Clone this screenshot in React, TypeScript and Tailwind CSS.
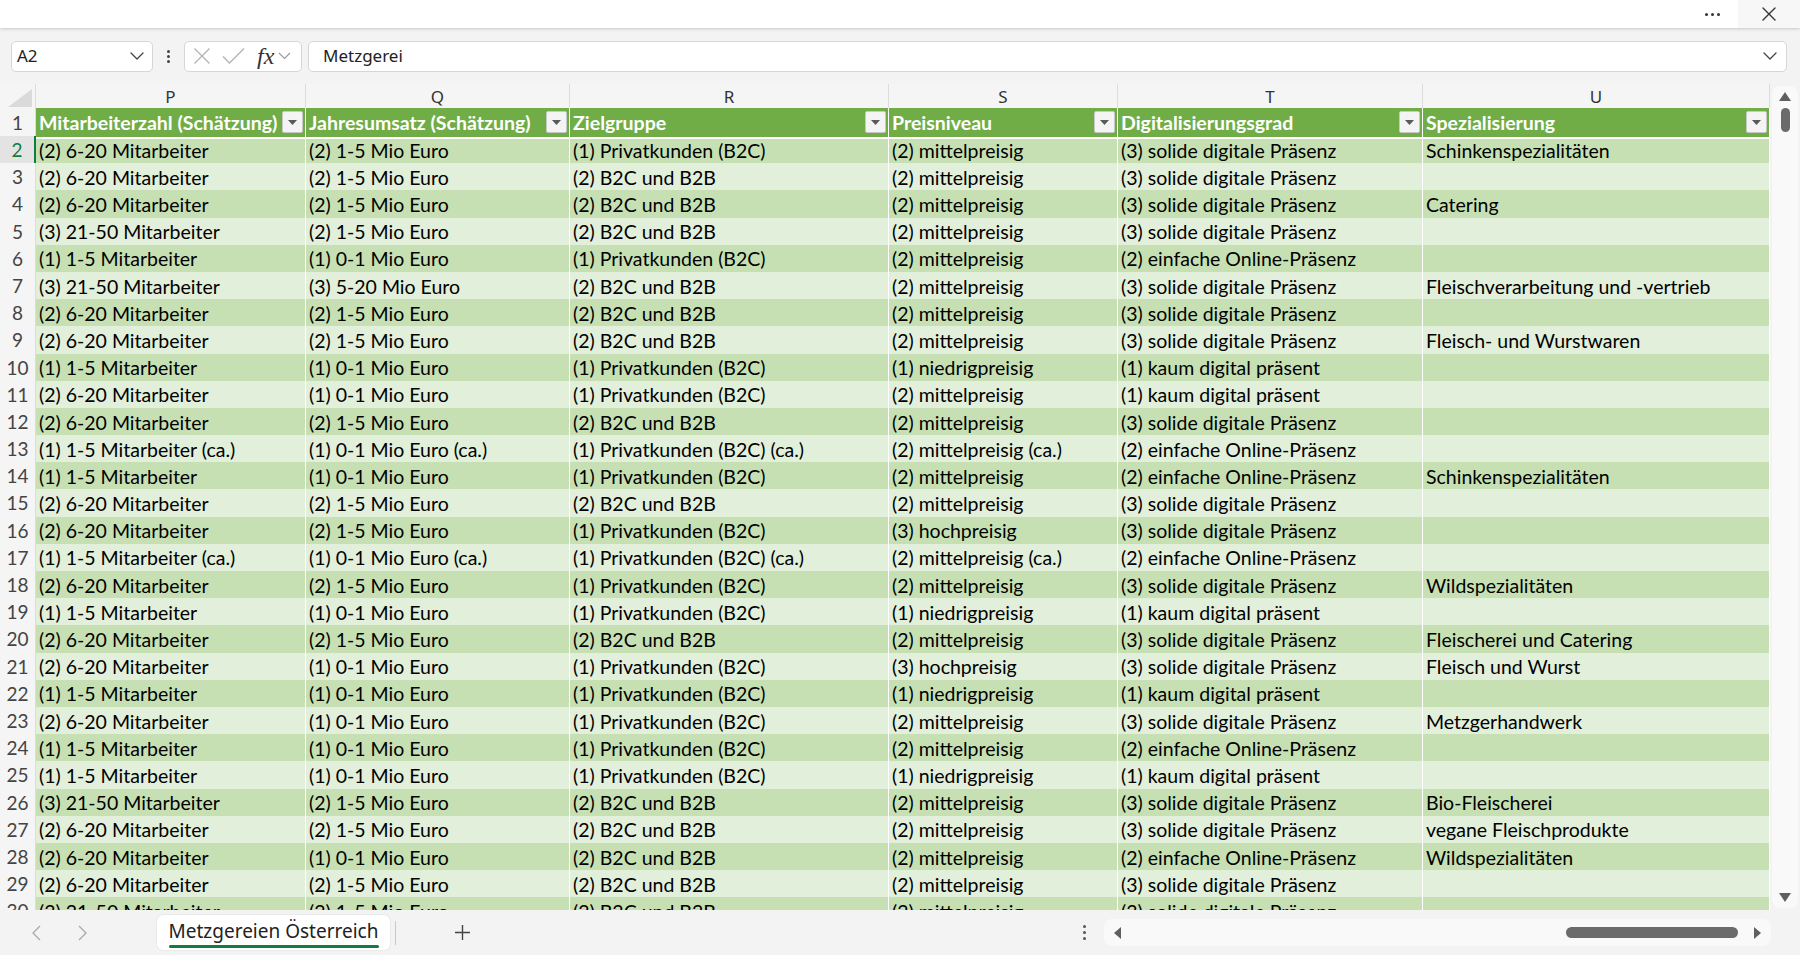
import React from "react";

type Row = [string, string, string, string, string, string];

const M = "(2) 6-20 Mitarbeiter";
const M1 = "(1) 1-5 Mitarbeiter";
const M3 = "(3) 21-50 Mitarbeiter";
const U2 = "(2) 1-5 Mio Euro";
const U1 = "(1) 0-1 Mio Euro";
const PK = "(1) Privatkunden (B2C)";
const BB = "(2) B2C und B2B";
const MP = "(2) mittelpreisig";
const NP = "(1) niedrigpreisig";
const HP = "(3) hochpreisig";
const SD = "(3) solide digitale Präsenz";
const EO = "(2) einfache Online-Präsenz";
const KD = "(1) kaum digital präsent";

const rows: Row[] = [
  [M, U2, PK, MP, SD, "Schinkenspezialitäten"],
  [M, U2, BB, MP, SD, ""],
  [M, U2, BB, MP, SD, "Catering"],
  [M3, U2, BB, MP, SD, ""],
  [M1, U1, PK, MP, EO, ""],
  [M3, "(3) 5-20 Mio Euro", BB, MP, SD, "Fleischverarbeitung und -vertrieb"],
  [M, U2, BB, MP, SD, ""],
  [M, U2, BB, MP, SD, "Fleisch- und Wurstwaren"],
  [M1, U1, PK, NP, KD, ""],
  [M, U1, PK, MP, KD, ""],
  [M, U2, BB, MP, SD, ""],
  ["(1) 1-5 Mitarbeiter (ca.)", "(1) 0-1 Mio Euro (ca.)", "(1) Privatkunden (B2C) (ca.)", "(2) mittelpreisig (ca.)", EO, ""],
  [M1, U1, PK, MP, EO, "Schinkenspezialitäten"],
  [M, U2, BB, MP, SD, ""],
  [M, U2, PK, HP, SD, ""],
  ["(1) 1-5 Mitarbeiter (ca.)", "(1) 0-1 Mio Euro (ca.)", "(1) Privatkunden (B2C) (ca.)", "(2) mittelpreisig (ca.)", EO, ""],
  [M, U2, PK, MP, SD, "Wildspezialitäten"],
  [M1, U1, PK, NP, KD, ""],
  [M, U2, BB, MP, SD, "Fleischerei und Catering"],
  [M, U1, PK, HP, SD, "Fleisch und Wurst"],
  [M1, U1, PK, NP, KD, ""],
  [M, U1, PK, MP, SD, "Metzgerhandwerk"],
  [M1, U1, PK, MP, EO, ""],
  [M1, U1, PK, NP, KD, ""],
  [M3, U2, BB, MP, SD, "Bio-Fleischerei"],
  [M, U2, BB, MP, SD, "vegane Fleischprodukte"],
  [M, U1, BB, MP, EO, "Wildspezialitäten"],
  [M, U2, BB, MP, SD, ""],
  [M3, U2, BB, MP, SD, ""],
];

const columns = [
  { letter: "P", title: "Mitarbeiterzahl (Schätzung)" },
  { letter: "Q", title: "Jahresumsatz (Schätzung)" },
  { letter: "R", title: "Zielgruppe" },
  { letter: "S", title: "Preisniveau" },
  { letter: "T", title: "Digitalisierungsgrad" },
  { letter: "U", title: "Spezialisierung" },
];

const GRID = "grid grid-cols-[36px_270px_264px_319px_229px_305px_347px]";
const CELL_FONT = "font-['Lato','Liberation_Sans',sans-serif]";
const UI_FONT = "font-['Noto_Sans','Open_Sans',sans-serif]";

function FilterButton() {
  return (
    <div className="absolute right-[2px] top-[3px] flex h-[22px] w-[21px] items-center justify-center rounded-[2px] border border-[#c8c8c8] bg-[#f4f4f4]">
      <svg width="9" height="5" viewBox="0 0 9 5">
        <path d="M0 0H9L4.5 5Z" fill="#5a5a5a" />
      </svg>
    </div>
  );
}

function ChevronDown({ className = "" }: { className?: string }) {
  return (
    <svg className={className} width="14" height="8" viewBox="0 0 14 8" fill="none">
      <path d="M1 1l6 6 6-6" stroke="#444" strokeWidth="1.3" strokeLinecap="round" strokeLinejoin="round" />
    </svg>
  );
}

function TopBar() {
  return (
    <div className="relative z-10 flex h-[28px] shrink-0 items-center justify-end bg-white shadow-[0_1px_3px_rgba(0,0,0,0.18)]">
      <div className="flex h-full w-[52px] items-center justify-center">
        <div className="flex gap-[3px]">
          <span className="h-[3px] w-[3px] rounded-full bg-[#333]" />
          <span className="h-[3px] w-[3px] rounded-full bg-[#333]" />
          <span className="h-[3px] w-[3px] rounded-full bg-[#333]" />
        </div>
      </div>
      <div className="flex h-full w-[62px] items-center justify-center bg-[#f7f7f7]">
        <svg width="16" height="16" viewBox="0 0 16 16">
          <path d="M2 2l12 12M14 2L2 14" stroke="#333" strokeWidth="1.4" strokeLinecap="round" />
        </svg>
      </div>
    </div>
  );
}

function FormulaBar() {
  return (
    <div className={`flex h-[56px] shrink-0 items-center bg-[#f3f3f3] pl-[11px] pr-[13px] ${UI_FONT}`}>
      <div className="flex h-[31px] w-[142px] items-center justify-between rounded-[5px] border border-[#d6d6d6] bg-white pl-[5px] pr-[8px]">
        <span className="text-[17px] text-[#222]">A2</span>
        <ChevronDown />
      </div>
      <div className="flex w-[31px] flex-col items-center justify-center gap-[2px]">
        <span className="h-[3px] w-[3px] rounded-full bg-[#444]" />
        <span className="h-[3px] w-[3px] rounded-full bg-[#444]" />
        <span className="h-[3px] w-[3px] rounded-full bg-[#444]" />
      </div>
      <div className="flex h-[31px] w-[118px] items-center rounded-[5px] border border-[#d6d6d6] bg-white pl-[8px]">
        <svg width="18" height="18" viewBox="0 0 18 18">
          <path d="M1.5 1.5l15 15M16.5 1.5l-15 15" stroke="#b4b4b4" strokeWidth="1.3" />
        </svg>
        <svg className="ml-[11px]" width="23" height="18" viewBox="0 0 23 18">
          <path d="M1 9.5l6.5 6.5L22 1.5" stroke="#b4b4b4" strokeWidth="1.3" fill="none" />
        </svg>
        <span className="ml-[12px] font-['Liberation_Serif',serif] text-[24px] italic leading-none text-[#333]">fx</span>
        <svg className="ml-[4px]" width="13" height="8" viewBox="0 0 13 8" fill="none">
          <path d="M1 1l5.5 5.5L12 1" stroke="#999" strokeWidth="1.1" />
        </svg>
      </div>
      <div className="ml-[6px] flex h-[31px] flex-1 items-center justify-between rounded-[5px] border border-[#d6d6d6] bg-white pl-[14px] pr-[9px]">
        <span className="text-[17px] text-[#222]">Metzgerei</span>
        <ChevronDown />
      </div>
    </div>
  );
}

function ColumnLetters() {
  return (
    <div className={`${GRID} h-[24px] bg-[#f5f5f5] ${UI_FONT}`}>
      <div className="relative border-r border-[#dcdcdc]">
        <svg className="absolute bottom-[3px] right-[3px]" width="24" height="18" viewBox="0 0 24 18">
          <path d="M24 0V18H0Z" fill="#dadada" />
        </svg>
      </div>
      {columns.map((c) => (
        <div
          key={c.letter}
          className="flex items-center justify-center border-r border-[#dcdcdc] text-[17px] text-[#333]"
        >
          {c.letter}
        </div>
      ))}
    </div>
  );
}

function HeaderRow() {
  return (
    <div className={`${GRID} h-[28px] ${CELL_FONT}`}>
      <div className="flex items-center justify-center border-b border-r border-[#dcdcdc] bg-[#f5f5f5] text-[19px] text-[#444]">
        1
      </div>
      {columns.map((c) => (
        <div
          key={c.letter}
          className="relative flex items-center border-r border-b-[2px] border-white bg-[#70ad47] pl-[3px] text-[19.5px] font-bold text-white"
        >
          <span className="whitespace-nowrap">{c.title}</span>
          <FilterButton />
        </div>
      ))}
    </div>
  );
}

function DataRow({ row, index }: { row: Row; index: number }) {
  const n = index + 2;
  const dark = n % 2 === 0;
  const selected = n === 2;
  return (
    <div className={`${GRID} h-[27.19px] ${CELL_FONT}`}>
      <div
        className={
          selected
            ? "flex items-center justify-center border-b border-r-[2px] border-b-[#dcdcdc] border-r-[#107c41] bg-[#e3e3e3] text-[19px] text-[#107c41]"
            : "flex items-center justify-center border-b border-r border-[#dcdcdc] bg-[#f5f5f5] text-[19px] text-[#444]"
        }
      >
        {n}
      </div>
      {row.map((v, i) => (
        <div
          key={i}
          className={`flex items-center overflow-hidden whitespace-nowrap border-b border-r border-white pl-[3px] text-[19.5px] text-black ${
            dark ? "bg-[#c6e0b4]" : "bg-[#e2efda]"
          }`}
        >
          {v}
        </div>
      ))}
    </div>
  );
}

function VerticalScrollbar() {
  return (
    <div className="flex w-[30px] shrink-0 flex-col items-center bg-[#f3f3f3] py-[2px]">
      <div className="flex h-full w-[26px] flex-col items-center rounded-[8px] bg-[#f9f9f9] py-[6px]">
        <svg width="12" height="9" viewBox="0 0 12 9">
          <path d="M6 0L12 9H0Z" fill="#5f5f5f" />
        </svg>
        <div className="mt-[7px] h-[24px] w-[9px] rounded-full bg-[#6b6b6b]" />
        <div className="flex-1" />
        <svg width="12" height="9" viewBox="0 0 12 9">
          <path d="M0 0H12L6 9Z" fill="#5f5f5f" />
        </svg>
      </div>
    </div>
  );
}

function SheetTabs() {
  return (
    <div className={`flex h-[45px] shrink-0 items-center bg-[#f3f3f3] ${UI_FONT}`}>
      <div className="flex w-[157px] items-center pl-[32px]">
        <svg width="9" height="16" viewBox="0 0 9 16" fill="none">
          <path d="M8 1L1 8l7 7" stroke="#a8a8a8" strokeWidth="1.3" />
        </svg>
        <svg className="ml-[37px]" width="9" height="16" viewBox="0 0 9 16" fill="none">
          <path d="M1 1l7 7-7 7" stroke="#a8a8a8" strokeWidth="1.3" />
        </svg>
      </div>
      <div className="flex h-[35px] w-[233px] flex-col items-center justify-center rounded-[6px] bg-white shadow-[0_0_2px_rgba(0,0,0,0.12)]">
        <span className="mt-[1px] text-[19px] leading-[24px] text-[#222]">Metzgereien Österreich</span>
        <span className="mt-[2px] h-[3px] w-[210px] rounded-full bg-[#107c41]" />
      </div>
      <div className="ml-[5px] h-[24px] w-px bg-[#c8c8c8]" />
      <div className="flex w-[132px] items-center justify-center">
        <svg width="17" height="17" viewBox="0 0 17 17">
          <path d="M8.5 1v15M1 8.5h15" stroke="#444" strokeWidth="1.4" />
        </svg>
      </div>
      <div className="flex-1" />
      <div className="flex w-[40px] flex-col items-center gap-[3px]">
        <span className="h-[3px] w-[3px] rounded-full bg-[#555]" />
        <span className="h-[3px] w-[3px] rounded-full bg-[#555]" />
        <span className="h-[3px] w-[3px] rounded-full bg-[#555]" />
      </div>
      <div className="mr-[29px] flex h-[27px] w-[667px] items-center rounded-[8px] bg-[#f9f9f9] px-[10px]">
        <svg width="7" height="12" viewBox="0 0 7 12">
          <path d="M7 0V12L0 6Z" fill="#5f5f5f" />
        </svg>
        <div className="flex-1" />
        <div className="mr-[16px] h-[11px] w-[172px] rounded-full bg-[#6b6b6b]" />
        <svg width="7" height="12" viewBox="0 0 7 12">
          <path d="M0 0V12L7 6Z" fill="#5f5f5f" />
        </svg>
      </div>
    </div>
  );
}

export default function App() {
  return (
    <div className="flex h-[955px] w-[1800px] flex-col overflow-hidden bg-[#f3f3f3]">
      <TopBar />
      <FormulaBar />
      <div className="flex min-h-0 flex-1">
        <div className="min-w-0 flex-1 overflow-hidden">
          <ColumnLetters />
          <HeaderRow />
          {rows.map((r, i) => (
            <DataRow key={i} row={r} index={i} />
          ))}
        </div>
        <VerticalScrollbar />
      </div>
      <SheetTabs />
    </div>
  );
}
